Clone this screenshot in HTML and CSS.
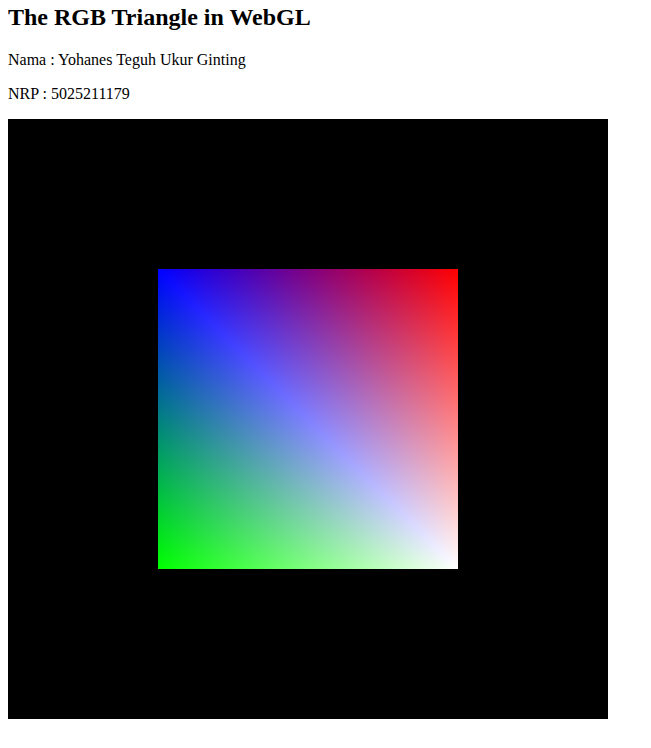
FILE: index.html
```html
<!DOCTYPE html>
<html>
<head>
<meta charset="utf-8">
<title>The RGB Triangle in WebGL</title>
<link rel="stylesheet" href="styles.css">
</head>
<body>
<h2 class="title">The RGB Triangle in WebGL</h2>
<p class="info">Nama : Yohanes Teguh Ukur Ginting</p>
<p class="info">NRP : 5025211179</p>
<div class="gl-canvas">
  <div class="quad"></div>
</div>
</body>
</html>
```
FILE: styles.css
```css
html, body {
  background: #fff;
}
body {
  margin: 4px 8px 8px;
  font-family: "Liberation Serif", "Times New Roman", serif;
  color: #000;
}
.title {
  font-size: 24px;
  font-weight: bold;
  margin: 0 0 20px;
}
.info {
  font-size: 16px;
  margin: 16px 0;
}
.gl-canvas {
  width: 600px;
  height: 600px;
  background: #000;
  display: flex;
  align-items: center;
  justify-content: center;
}
.quad {
  width: 300px;
  height: 300px;
  background-color: #000;
  background-image:
    linear-gradient(to right, #000, #f00),
    linear-gradient(to bottom, #000, #0f0),
    linear-gradient(to top right, #000, #00f, #000);
  background-blend-mode: screen;
}
```
